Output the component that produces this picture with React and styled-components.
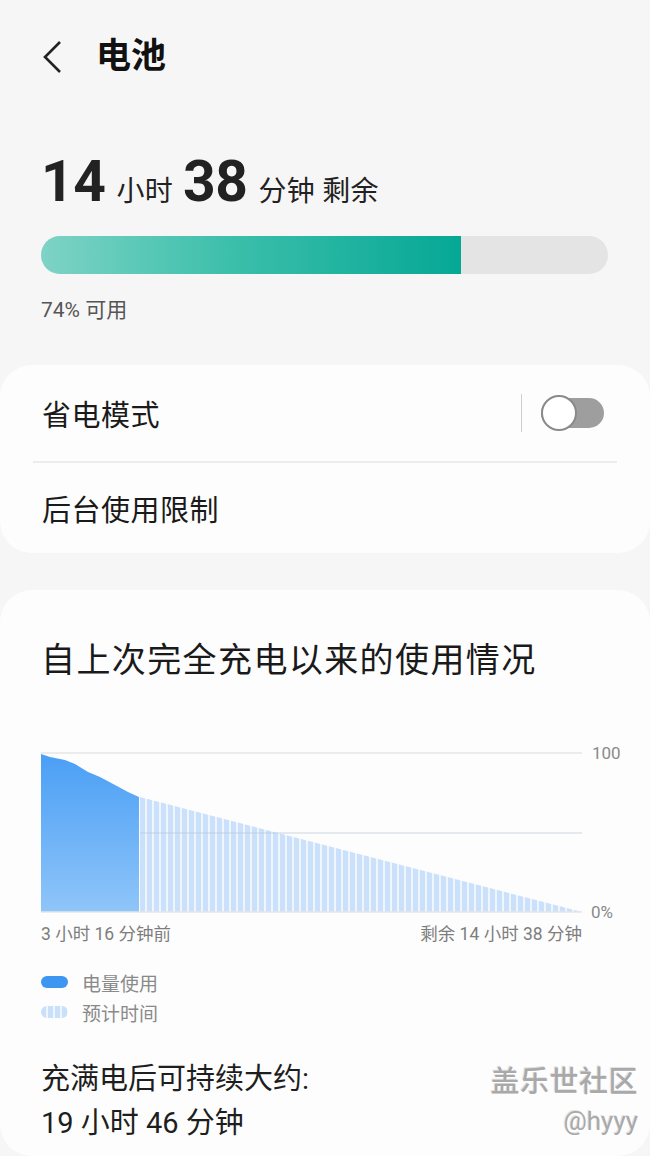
import React from 'react';
import styled, { createGlobalStyle } from 'styled-components';

const GlobalStyle = createGlobalStyle`
  html, body {
    margin: 0;
    padding: 0;
    background: #f6f6f6;
  }
  body {
    font-family: Roboto, "Noto Sans CJK SC", "Noto Sans", sans-serif;
    color: #1f1f1f;
  }
`;

const Page = styled.div`
  position: relative;
  width: 650px;
  height: 1156px;
  overflow: hidden;
  display: flex;
  flex-direction: column;
`;

const Header = styled.header`
  height: 114px;
  display: flex;
  align-items: center;
  padding-left: 42px;
  gap: 32px;
`;

const Title = styled.h1`
  margin: 0;
  font-size: 35px;
  font-weight: 700;
  line-height: 40px;
  color: #111;
`;

const Summary = styled.section`
  padding: 0 42px 0 41px;
`;

const Headline = styled.div`
  margin-top: 39px;
  display: flex;
  align-items: baseline;
  line-height: 1;
`;

const BigNum = styled.span`
  font-size: 57px;
  font-weight: 700;
  color: #222;
  letter-spacing: -0.5px;
`;

const Unit = styled.span`
  font-size: 28px;
  font-weight: 400;
  color: #222;
  margin: 0 10px 0 11px;
  letter-spacing: 0.3px;
`;

const Track = styled.div`
  margin-top: 26px;
  height: 38px;
  border-radius: 19px;
  background: #e4e4e4;
  overflow: hidden;
`;

const Fill = styled.div`
  height: 100%;
  background: linear-gradient(90deg, #7ed3c5 0%, #3cbfab 45%, #05a895 100%);
`;

const Available = styled.div`
  margin-top: 23px;
  font-size: 21px;
  line-height: 26px;
  color: #555;
`;

const Card = styled.section`
  background: #fdfdfd;
  border-radius: 32px;
  margin-top: ${p => p.$top}px;
  ${p => p.$grow && 'flex: 1;'}
`;

const Row = styled.div`
  height: ${p => p.$h || 96}px;
  display: flex;
  align-items: center;
  justify-content: space-between;
  padding: 0 46px 0 42px;
  font-size: 29px;
  letter-spacing: 0.5px;
  color: #1a1a1a;
  box-sizing: border-box;
`;

const RowDivider = styled.div`
  height: 2px;
  margin: 0 33px;
  background: #ececec;
`;

const SwitchArea = styled.div`
  display: flex;
  align-items: center;
  gap: 19px;
`;

const VLine = styled.div`
  width: 1px;
  height: 38px;
  background: #cfcfcf;
`;

const Switch = styled.div`
  position: relative;
  width: 63px;
  height: 36px;
  display: flex;
  align-items: center;
`;

const SwitchTrack = styled.div`
  width: 100%;
  height: 30px;
  border-radius: 15px;
  background: #9e9e9e;
`;

const Knob = styled.div`
  position: absolute;
  left: 0;
  top: 0;
  width: 32px;
  height: 32px;
  border-radius: 50%;
  background: #fff;
  border: 2px solid #8a8a8a;
`;

const UsageBody = styled.div`
  padding: 50px 0 0 41px;
`;

const UsageTitle = styled.h2`
  margin: 0;
  font-size: 34px;
  font-weight: 400;
  line-height: 40px;
  color: #1a1a1a;
  letter-spacing: 1.4px;
`;

const ChartSvg = styled.svg`
  display: block;
  margin-top: 61px;
`;

const AxisRow = styled.div`
  width: 541px;
  display: flex;
  justify-content: space-between;
  font-size: 17.5px;
  line-height: 22px;
  color: #7d7d7d;
`;

const Legend = styled.ul`
  list-style: none;
  margin: 22px 0 0;
  padding: 0;
`;

const LegendItem = styled.li`
  display: flex;
  align-items: center;
  gap: 14px;
  height: 30px;
  font-size: 19px;
  color: #8a8a8a;
`;

const Pill = styled.span`
  width: 27px;
  height: 12px;
  border-radius: 6px;
  background: ${p => p.$striped
    ? 'repeating-linear-gradient(90deg, #c9e0fb 0 5px, #eef5fd 5px 7px)'
    : '#3d97f1'};
`;

const Lasting = styled.div`
  margin-top: 30px;
  font-size: 29px;
  line-height: 44px;
  color: #1e1e1e;
`;

const Watermark = styled.div`
  position: absolute;
  right: 12px;
  bottom: 16px;
  display: flex;
  flex-direction: column;
  align-items: flex-end;
  color: #a9a9a9;
  text-shadow: 1px 1px 0 #fff, -1px -1px 0 #e2e2e2;
`;

const MarkTitle = styled.span`
  font-size: 29px;
  line-height: 40px;
  font-weight: 500;
  letter-spacing: 0.5px;
`;

const MarkUser = styled.span`
  font-size: 26px;
  line-height: 38px;
`;

const Chevron = () => (
  <svg width="22" height="34" viewBox="0 0 22 34">
    <polyline points="18,2 3,17 18,32" fill="none" stroke="#222" strokeWidth="2.6" />
  </svg>
);

const UsageChart = () => {
  const top = 12;
  const bottom = top + 159;
  const used = [[0, 1], [9, 4], [24, 7], [34, 11], [47, 19], [59, 24], [74, 32], [87, 39], [98, 44]]
    .map(([x, y]) => `${x},${y + top}`).join(' ');
  return (
    <ChartSvg width="600" height="182" viewBox="0 0 600 182">
      <defs>
        <linearGradient id="usedFill" x1="0" y1="0" x2="0" y2="1">
          <stop offset="0" stopColor="#4a9ff5" />
          <stop offset="1" stopColor="#8fc5f9" />
        </linearGradient>
        <pattern id="stripes" width="7" height="10" patternUnits="userSpaceOnUse" x="99">
          <rect width="7" height="10" fill="#eef5fd" />
          <rect width="5" height="10" fill="#cbe1fb" />
        </pattern>
      </defs>
      <line x1="0" y1={top} x2="541" y2={top} stroke="#e6e6e6" strokeWidth="1.5" />
      <polygon points={`${used} 98,${bottom} 0,${bottom}`} fill="url(#usedFill)" />
      <polygon points={`99,${top + 44} 541,${bottom} 99,${bottom}`} fill="url(#stripes)" />
      <line x1="99" y1={top + 80} x2="541" y2={top + 80} stroke="#b9c8d8" strokeOpacity="0.5" strokeWidth="1.5" />
      <line x1="0" y1={bottom} x2="541" y2={bottom} stroke="#e4e4e4" strokeWidth="1.5" />
      <text x="551" y={top + 6} fontSize="17" fill="#8a8a8a" fontFamily="Roboto, sans-serif">100</text>
      <text x="550" y={bottom + 6} fontSize="17" fill="#8a8a8a" fontFamily="Roboto, sans-serif">0%</text>
    </ChartSvg>
  );
};

export default function App() {
  const level = 74;
  return (
    <Page>
      <GlobalStyle />
      <Header>
        <Chevron />
        <Title>电池</Title>
      </Header>

      <Summary>
        <Headline>
          <BigNum>14</BigNum>
          <Unit>小时</Unit>
          <BigNum>38</BigNum>
          <Unit>分钟 剩余</Unit>
        </Headline>
        <Track>
          <Fill style={{ width: `${level}%` }} />
        </Track>
        <Available>{level}% 可用</Available>
      </Summary>

      <Card $top={42}>
        <Row>
          省电模式
          <SwitchArea>
            <VLine />
            <Switch>
              <SwitchTrack />
              <Knob />
            </Switch>
          </SwitchArea>
        </Row>
        <RowDivider />
        <Row $h={90}>后台使用限制</Row>
      </Card>

      <Card $top={37} $grow>
        <UsageBody>
          <UsageTitle>自上次完全充电以来的使用情况</UsageTitle>
          <UsageChart />
          <AxisRow>
            <span>3 小时 16 分钟前</span>
            <span>剩余 14 小时 38 分钟</span>
          </AxisRow>
          <Legend>
            <LegendItem><Pill />电量使用</LegendItem>
            <LegendItem><Pill $striped />预计时间</LegendItem>
          </Legend>
          <Lasting>
            充满电后可持续大约:
            <br />
            19 小时 46 分钟
          </Lasting>
        </UsageBody>
      </Card>

      <Watermark>
        <MarkTitle>盖乐世社区</MarkTitle>
        <MarkUser>@hyyy</MarkUser>
      </Watermark>
    </Page>
  );
}
